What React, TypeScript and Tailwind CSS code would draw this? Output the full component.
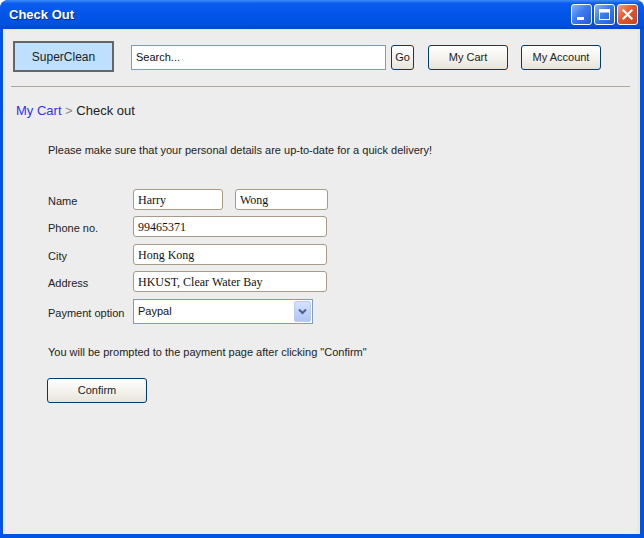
import React from "react";

const tahoma = "font-['Liberation_Sans',Arial,sans-serif]";

function XpButton({ label, w }: { label: string; w: string }) {
  return (
    <button
      className={`${w} h-[25px] rounded-[3px] border border-[#003C74] bg-[linear-gradient(to_bottom,#FFFFFF_0%,#F4F3EE_50%,#E6E4DA_100%)] text-[11px] text-[#222] ${tahoma} flex items-center justify-center`}
    >
      {label}
    </button>
  );
}

function TitleButton({ kind }: { kind: "min" | "max" | "close" }) {
  const bg =
    kind === "close"
      ? "bg-[linear-gradient(135deg,#F0A08A_0%,#E2582F_45%,#C6431C_100%)]"
      : "bg-[linear-gradient(135deg,#8BB2F8_0%,#3D7BF0_45%,#2459D8_100%)]";
  return (
    <div className={`w-[21px] h-[21px] rounded-[3px] border border-white ${bg} flex items-center justify-center`}>
      <svg width="13" height="13" viewBox="0 0 13 13">
        {kind === "min" && <rect x="2" y="9" width="7" height="3" fill="white" />}
        {kind === "max" && (
          <g fill="none" stroke="white">
            <rect x="1.5" y="1.5" width="10" height="10" strokeWidth="1" />
            <rect x="1.5" y="2" width="10" height="2" fill="white" strokeWidth="1" />
          </g>
        )}
        {kind === "close" && (
          <path d="M2.5 2.5 L10.5 10.5 M10.5 2.5 L2.5 10.5" stroke="white" strokeWidth="2.2" strokeLinecap="square" />
        )}
      </svg>
    </div>
  );
}

function TextBox({ value, w }: { value: string; w: string }) {
  return (
    <div
      className={`${w} h-[21px] rounded-[3px] border border-[#A69C88] bg-white px-[4px] flex items-center text-[12px] text-[#111] font-['Liberation_Serif','Times_New_Roman',serif]`}
    >
      {value}
    </div>
  );
}

function Row({ label, children, mt }: { label: string; children: React.ReactNode; mt: string }) {
  return (
    <div className={`flex items-center ${mt}`}>
      <div className={`w-[85px] pt-[4px] text-[11px] text-[#222] ${tahoma}`}>{label}</div>
      {children}
    </div>
  );
}

export default function App() {
  return (
    <div className="w-[644px] h-[538px] bg-[#0054E3] rounded-t-[8px] flex flex-col overflow-hidden">
      <div className="h-[29px] shrink-0 rounded-t-[8px] bg-[linear-gradient(to_bottom,#3C8CF5_0%,#0A5CEE_12%,#0055E8_50%,#0050E0_85%,#0045CC_100%)] flex items-center pl-[9px] pr-[6px]">
        <span className="text-white font-bold text-[13px] font-['Liberation_Sans',Arial,sans-serif] [text-shadow:1px_1px_0_#0A2A8A]">
          Check Out
        </span>
        <div className="ml-auto flex gap-[2px]">
          <TitleButton kind="min" />
          <TitleButton kind="max" />
          <TitleButton kind="close" />
        </div>
      </div>
      <div className="flex-1 ml-[3px] mr-[4px] mb-[4px] bg-[#ECE9D8] pl-[3px] pr-[3px] pt-[2px]">
        <div className="h-full bg-[#EDEDED] flex flex-col">
          <div className="flex items-start pl-[7px] pt-[10px]">
            <div className="w-[101px] h-[31px] border-2 border-[#666] bg-[#BFDFFF] flex items-center justify-center text-[12px] text-[#222] font-['Liberation_Sans',Arial,sans-serif]">
              SuperClean
            </div>
            <div className="mt-[4px] flex items-center">
              <div className={`ml-[17px] w-[255px] h-[25px] border border-[#7F9DB9] bg-white flex items-center px-[4px] text-[11px] text-[#111] ${tahoma}`}>
                Search...
              </div>
              <div className="ml-[5px]">
                <XpButton label="Go" w="w-[23px]" />
              </div>
              <div className="ml-[14px]">
                <XpButton label="My Cart" w="w-[80px]" />
              </div>
              <div className="ml-[13px]">
                <XpButton label="My Account" w="w-[80px]" />
              </div>
            </div>
          </div>
          <div className="ml-[5px] mt-[14px] w-[619px] h-px bg-[#ACA899]" />
          <div className="ml-[10px] mt-[16px] text-[13px] leading-[16px] font-['Liberation_Sans',Arial,sans-serif]">
            <span className="text-[#3333EE]">My Cart</span>
            <span className="text-[#888]"> &gt; </span>
            <span className="text-[#222]">Check out</span>
          </div>
          <div className="pl-[42px] flex flex-col">
            <div className={`mt-[24px] text-[11px] leading-[14px] text-[#222] ${tahoma}`}>
              Please make sure that your personal details are up-to-date for a quick delivery!
            </div>
            <Row label="Name" mt="mt-[32px]">
              <TextBox value="Harry" w="w-[90px]" />
              <div className="ml-[12px]">
                <TextBox value="Wong" w="w-[93px]" />
              </div>
            </Row>
            <Row label="Phone no." mt="mt-[6px]">
              <TextBox value="99465371" w="w-[194px]" />
            </Row>
            <Row label="City" mt="mt-[7px]">
              <TextBox value="Hong Kong" w="w-[194px]" />
            </Row>
            <Row label="Address" mt="mt-[6px]">
              <TextBox value="HKUST, Clear Water Bay" w="w-[194px]" />
            </Row>
            <Row label="Payment option" mt="mt-[7px]">
              <div className={`w-[180px] h-[25px] border border-[#7F9DB9] bg-white flex items-center pl-[4px] pr-[1px] text-[11px] text-[#111] ${tahoma}`}>
                <span>Paypal</span>
                <div className="ml-auto w-[17px] h-[21px] rounded-[2px] border border-[#B9CBF3] bg-[linear-gradient(to_bottom,#D6E3FD_0%,#C1D3FB_50%,#B0C6F6_100%)] flex items-center justify-center">
                  <svg width="9" height="7" viewBox="0 0 9 7">
                    <path d="M1 1.5 L4.5 5 L8 1.5" fill="none" stroke="#4D6185" strokeWidth="2" />
                  </svg>
                </div>
              </div>
            </Row>
            <div className={`mt-[21px] text-[11px] leading-[14px] text-[#222] ${tahoma}`}>
              You will be prompted to the payment page after clicking "Confirm"
            </div>
            <div className="mt-[19px] -ml-px">
              <button
                className={`w-[100px] h-[25px] rounded-[3px] border border-[#003C74] bg-[linear-gradient(to_bottom,#FFFFFF_0%,#F4F3EE_50%,#E6E4DA_100%)] text-[11px] text-[#222] ${tahoma} flex items-center justify-center`}
              >
                Confirm
              </button>
            </div>
          </div>
        </div>
      </div>
    </div>
  );
}
